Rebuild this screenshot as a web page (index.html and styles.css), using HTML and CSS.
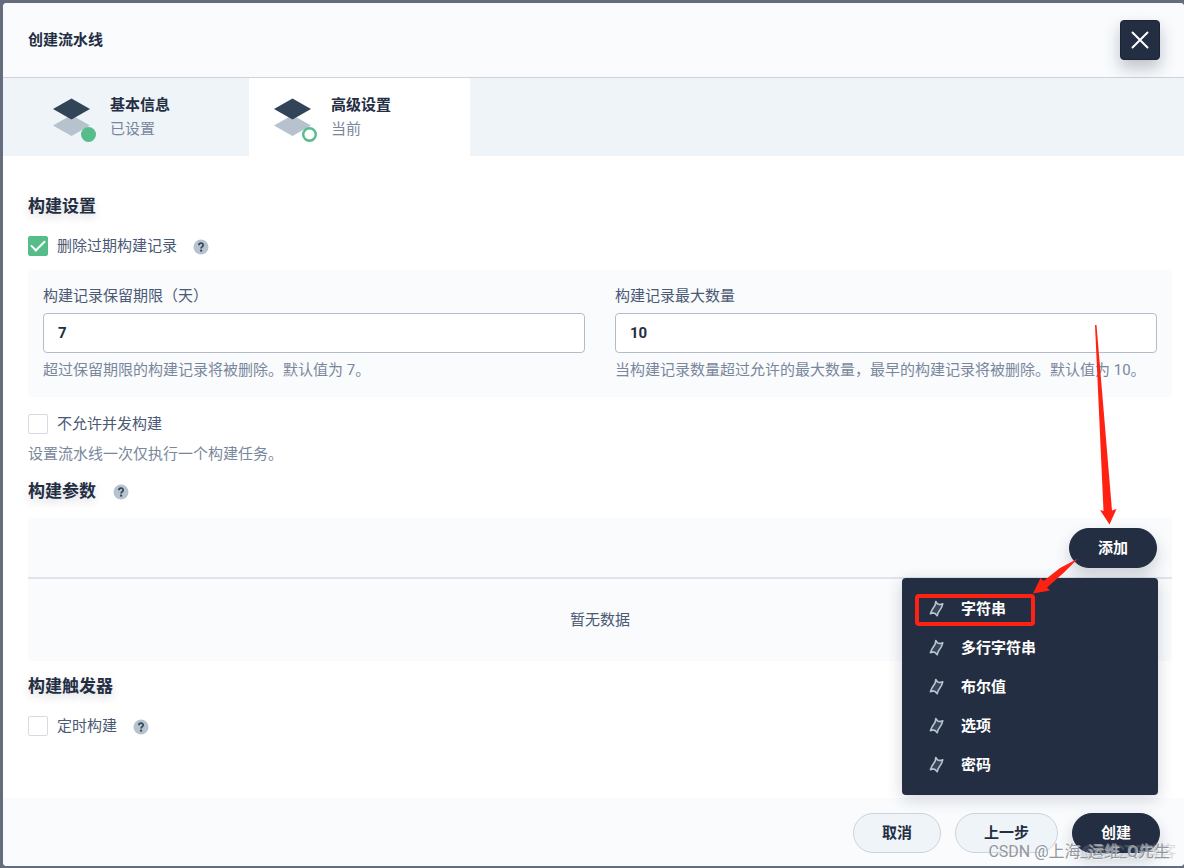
FILE: index.html
```html
<!DOCTYPE html>
<html lang="zh-CN">
<head>
<meta charset="utf-8">
<meta name="viewport" content="width=device-width, initial-scale=1">
<title>创建流水线</title>
<link rel="stylesheet" href="styles.css">
</head>
<body>
<svg class="defs" aria-hidden="true">
  <symbol id="ticket" viewBox="0 0 16 18">
    <path d="M6.800 1.500 L8.600 4 L11.200 4.600 L13.800 3.800 L12.400 7.600 L9.200 12.600 L8.200 15.800 L6.200 13.600 L4.200 12.900 L1.400 13.600 L3 10 L6.200 5 Z" fill="#36475b" stroke="#b6c2cd" stroke-width="1.600" stroke-linejoin="round"/>
  </symbol>
  <symbol id="question" viewBox="0 0 16 16">
    <circle cx="8" cy="8" r="7.500" fill="#b6c2cd"/>
    <path d="M5.900 6.300 C5.900 3.500 10.200 3.500 10.200 6 C10.200 7.600 8.100 7.600 8.100 9.500" fill="none" stroke="#324558" stroke-width="1.700"/>
    <circle cx="8.100" cy="11.700" r="1.100" fill="#324558"/>
  </symbol>
  <symbol id="layers" viewBox="0 0 44 48">
    <path d="M0 32.500 L18.500 22 L37 32.500 L18.500 43 Z" fill="#b6c2cd"/>
    <path d="M0 16 L18.500 5.500 L37 16 L18.500 26.500 Z" fill="#324558"/>
  </symbol>
</svg>
<div class="dialog" role="dialog" aria-labelledby="title">
  <header class="header">
    <h1 class="title" id="title">创建流水线</h1>
    <button class="close" type="button" aria-label="关闭">
      <svg width="20" height="20" viewBox="0 0 20 20"><path d="M2.500 2.500 L17.500 17.500 M17.500 2.500 L2.500 17.500" stroke="#fff" stroke-width="2" stroke-linecap="round"/></svg>
    </button>
  </header>
  <nav class="tabs">
    <div class="tab">
      <svg class="tab-icon" width="44" height="48" viewBox="0 0 44 48"><use href="#layers"/><circle cx="35.500" cy="41.500" r="7.500" fill="#55bc8a"/></svg>
      <div><div class="tab-name">基本信息</div><div class="tab-state">已设置</div></div>
    </div>
    <div class="tab tab-current">
      <svg class="tab-icon" width="44" height="48" viewBox="0 0 44 48"><use href="#layers"/><circle cx="35.500" cy="41.500" r="6.300" fill="#fff" stroke="#55bc8a" stroke-width="2.400"/></svg>
      <div><div class="tab-name">高级设置</div><div class="tab-state">当前</div></div>
    </div>
  </nav>
  <main class="content">
    <h2 class="heading">构建设置</h2>
    <div class="check-row">
      <input class="check" type="checkbox" id="discard" checked>
      <label for="discard">删除过期构建记录</label>
      <svg class="help" width="16" height="16"><use href="#question"/></svg>
    </div>
    <section class="panel fields">
      <div class="field">
        <label for="days">构建记录保留期限（天）</label>
        <input class="text" id="days" type="text" value="7">
        <p class="hint">超过保留期限的构建记录将被删除。默认值为 7。</p>
      </div>
      <div class="field">
        <label for="count">构建记录最大数量</label>
        <input class="text" id="count" type="text" value="10">
        <p class="hint">当构建记录数量超过允许的最大数量，最早的构建记录将被删除。默认值为 10。</p>
      </div>
    </section>
    <div class="check-row check-row-plain">
      <input class="check" type="checkbox" id="concurrent">
      <label for="concurrent">不允许并发构建</label>
    </div>
    <p class="hint hint-row">设置流水线一次仅执行一个构建任务。</p>
    <h2 class="heading heading-params">构建参数 <svg class="help" width="16" height="16"><use href="#question"/></svg></h2>
    <section class="panel params">
      <div class="toolbar">
        <button class="btn btn-dark" type="button">添加</button>
        <div class="menu">
          <button class="menu-item" type="button"><svg width="16" height="18"><use href="#ticket"/></svg>字符串</button>
          <button class="menu-item" type="button"><svg width="16" height="18"><use href="#ticket"/></svg>多行字符串</button>
          <button class="menu-item" type="button"><svg width="16" height="18"><use href="#ticket"/></svg>布尔值</button>
          <button class="menu-item" type="button"><svg width="16" height="18"><use href="#ticket"/></svg>选项</button>
          <button class="menu-item" type="button"><svg width="16" height="18"><use href="#ticket"/></svg>密码</button>
        </div>
      </div>
      <div class="empty">暂无数据</div>
    </section>
    <h2 class="heading heading-trigger">构建触发器</h2>
    <div class="check-row">
      <input class="check" type="checkbox" id="timer">
      <label for="timer">定时构建</label>
      <svg class="help" width="16" height="16"><use href="#question"/></svg>
    </div>
  </main>
  <footer class="footer">
    <button class="btn" type="button">取消</button>
    <button class="btn" type="button">上一步</button>
    <button class="btn btn-dark" type="button">创建</button>
  </footer>
</div>
<svg class="arrows" width="284" height="340" viewBox="900 300 284 340" aria-hidden="true">
  <g fill="#ff2212">
    <path d="M1095 325 H1096.500 L1112 510.500 L1116.500 509 L1109.500 524.500 L1100 510 L1103.500 511 Z"/>
    <path d="M1078 558.500 L1060 568 L1043.500 581 L1040.500 578 L1033 593.500 L1050 590.500 L1047 587.500 L1064 572.500 Z"/>
  </g>
  <rect x="917" y="596" width="116" height="28" rx="2" fill="none" stroke="#ff2212" stroke-width="4"/>
</svg>
<div class="mark mark-faint">@51CTO博客</div>
<div class="mark">CSDN @上海_运维_Q先生</div>
</body>
</html>
```

FILE: styles.css
```css
* {
  box-sizing: border-box;
}

body {
  margin: 0;
  padding: 3px 0 2px 3px;
  min-height: 100vh;
  display: flex;
  position: relative;
  background: #656c7d;
  color: #4a5974;
  font: 15px/22px Roboto, "Noto Sans CJK SC", sans-serif;
}

h1,
h2,
p {
  margin: 0;
}

button,
input {
  font: inherit;
}

.defs {
  position: absolute;
  width: 0;
  height: 0;
}

.dialog {
  flex: 1;
  display: flex;
  flex-direction: column;
  border-radius: 4px;
  background: #fff;
}

.header {
  display: flex;
  align-items: center;
  justify-content: space-between;
  padding: 17px 24px 17px 25px;
  border-bottom: 1px solid #ccd3db;
  border-radius: 4px 4px 0 0;
  background: #f9fbfd;
}

.title {
  color: #242e42;
  font-size: 15px;
  line-height: 22px;
}

.close {
  display: grid;
  place-items: center;
  width: 40px;
  height: 40px;
  padding: 0;
  border: 1px solid #1b2436;
  border-radius: 4px;
  background: #242e42;
  box-shadow: 0 8px 16px rgba(36, 46, 66, 0.28);
}

.tabs {
  display: flex;
  padding-left: 25px;
  background: #eff4f9;
}

.tab {
  display: flex;
  align-items: center;
  gap: 13px;
  width: 221px;
  padding: 15px 0 15px 25px;
  line-height: 24px;
}

.tab-current {
  background: #fff;
}

.tab-icon {
  overflow: visible;
}

.tab-name {
  color: #242e42;
  font-weight: 700;
}

.tab-state,
.hint {
  color: #79879c;
}

.content {
  flex: 1;
  padding: 38px 12px 62px 25px;
}

.heading {
  display: flex;
  align-items: center;
  gap: 17px;
  color: #242e42;
  font-size: 17px;
  line-height: 24px;
  text-shadow: 0 4px 8px rgba(36, 46, 66, 0.16);
}

.help {
  flex: none;
  margin-top: 2px;
}

.check-row {
  display: flex;
  align-items: center;
  gap: 9px;
  height: 20px;
  margin-top: 18px;
}

.check-row .help {
  margin-left: 7px;
}

.check-row-plain {
  margin-top: 17px;
}

.check {
  appearance: none;
  width: 20px;
  height: 20px;
  margin: 0;
  border: 1px solid #d5dae3;
  border-radius: 2px;
  background: #fff;
}

.check:checked {
  display: grid;
  place-items: center;
  border-color: #55bc8a;
  background: #55bc8a;
}

.check:checked::before {
  content: "";
  width: 12px;
  height: 6px;
  margin-bottom: 4px;
  border: solid #fff;
  border-width: 0 0 2px 2px;
  transform: rotate(-45deg);
}

.panel {
  border-radius: 4px;
  background: #f9fbfd;
}

.fields {
  display: grid;
  grid-template-columns: 1fr 1fr;
  gap: 30px;
  margin-top: 14px;
  padding: 15px 15px 16px;
}

.field {
  display: grid;
  gap: 6px;
}

.text {
  width: 100%;
  height: 40px;
  padding: 0 14px;
  border: 1px solid #b4bccb;
  border-radius: 4px;
  background: #fff;
  color: #242e42;
  font-weight: 700;
}

.hint-row {
  margin-top: 9px;
}

.heading-params {
  margin-top: 14px;
}

.params {
  margin-top: 15px;
}

.toolbar {
  position: relative;
  display: flex;
  justify-content: flex-end;
  padding: 10px 15px 9px;
  border-bottom: 2px solid #dfe4ec;
}

.empty {
  padding: 30px 0;
  text-align: center;
}

.heading-trigger {
  margin-top: 13px;
}

.btn {
  height: 40px;
  padding: 0 28px;
  border: 1px solid #ccd3db;
  border-radius: 20px;
  background: #eff4f9;
  color: #242e42;
  font-weight: 700;
}

.btn-dark {
  border-color: #242e42;
  background: #242e42;
  color: #fff;
  box-shadow: 0 8px 16px rgba(36, 46, 66, 0.2);
}

.menu {
  position: absolute;
  top: 60px;
  right: 14px;
  width: 256px;
  padding: 11px 0;
  border-radius: 4px;
  background: #242e42;
  box-shadow: 0 4px 16px rgba(36, 46, 66, 0.2);
}

.menu-item {
  display: flex;
  align-items: center;
  gap: 16px;
  width: 100%;
  height: 39px;
  padding: 0 27px;
  border: 0;
  background: none;
  color: #fff;
  font-weight: 700;
}

.footer {
  display: flex;
  justify-content: flex-end;
  gap: 14px;
  padding: 15px 24px 13px;
  border-radius: 0 0 4px 4px;
  background: #f9fbfd;
}

.arrows {
  position: absolute;
  top: 300px;
  right: 0;
}

.mark {
  position: absolute;
  right: 14px;
  bottom: 4px;
  color: #93969c;
  font-size: 16px;
  line-height: 24px;
  text-shadow: 1px 1px 1px rgba(255, 255, 255, 0.7);
}

.mark-faint {
  right: 8px;
  opacity: 0.3;
}
```
